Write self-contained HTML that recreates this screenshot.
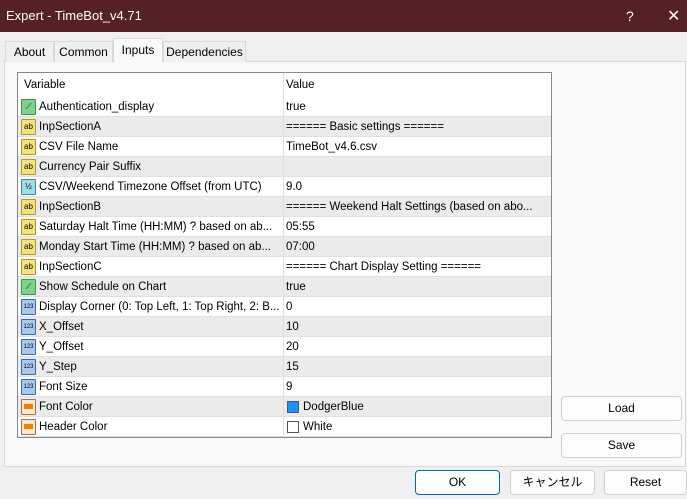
<!DOCTYPE html>
<html><head><meta charset="utf-8"><style>
*{box-sizing:border-box;margin:0;padding:0}
body{width:687px;height:499px;background:#f0f0f0;font-family:"Liberation Sans","Noto Sans CJK JP",sans-serif;font-size:11.5px;color:#000;position:relative;overflow:hidden}
.title{position:absolute;left:0;top:0;width:687px;height:32px;background:#562027;color:#fff;font-size:13px}
.title span{position:absolute;top:8px}
.tab{position:absolute;top:41px;height:21px;border:1px solid #d9d9d9;border-bottom:none;background:#f0f0f0;padding:3px 0;text-align:center;font-size:12px;white-space:nowrap}
.panel{position:absolute;left:4px;top:61px;width:682px;height:406px;border:1px solid #d9d9d9;background:#f9f9f9}
.grid{position:absolute;left:17px;top:72px;width:535px;height:366px;border:1px solid #828790;background:#fff}
.row{position:absolute;left:0;width:533px;height:20px;border-bottom:1px solid #e0e0e0}
.row.g{background:#ebebeb}
.row .n{position:absolute;left:21px;top:4px;width:242px;overflow:hidden;white-space:nowrap}
.row .v{position:absolute;left:268px;top:4px;white-space:nowrap}
.row .d{position:absolute;left:265px;top:0;width:1px;height:20px;background:#e0e0e0}
.ic{position:absolute;left:3px;top:2px;width:15px;height:16px;border:1px solid #b09a30;background:#f5e27a;font-size:8px;line-height:14px;text-align:center;border-radius:1px}
.btn{position:absolute;background:#fdfdfd;border:1px solid #d0d0d0;border-radius:4px;text-align:center;font-size:12px;line-height:22px}
</style></head><body>
<div class="title"><span style="left:6px">Expert - TimeBot_v4.71</span><span style="left:626px;font-size:14px">?</span><span style="left:667px;font-size:16px;top:6px">✕</span></div>
<div class="panel"></div>
<div class="tab" style="left:5px;width:49px">About</div>
<div class="tab" style="left:54px;width:59px">Common</div>
<div class="tab" style="left:113px;top:38px;height:24px;width:50px;background:#f9f9f9;padding-top:4px">Inputs</div>
<div class="tab" style="left:163px;width:83px">Dependencies</div>
<div class="grid">
<div class="row" style="top:0;height:24px;border:none"><span class="n" style="left:6px;top:6px">Variable</span><span class="v" style="top:6px">Value</span><span class="d" style="height:24px"></span></div>
<div class="row" style="top:24px"><span class="ic" style="background:#7ed38a;border-color:#3a9a4a">⟋</span><span class="n">Authentication_display</span><span class="d"></span><span class="v">true</span></div>
<div class="row g" style="top:44px"><span class="ic">ab</span><span class="n">InpSectionA</span><span class="d"></span><span class="v">====== Basic settings ======</span></div>
<div class="row" style="top:64px"><span class="ic">ab</span><span class="n">CSV File Name</span><span class="d"></span><span class="v">TimeBot_v4.6.csv</span></div>
<div class="row g" style="top:84px"><span class="ic">ab</span><span class="n">Currency Pair Suffix</span><span class="d"></span><span class="v"></span></div>
<div class="row" style="top:104px"><span class="ic" style="background:#9fdbe8;border-color:#3a8aa8">½</span><span class="n">CSV/Weekend Timezone Offset (from UTC)</span><span class="d"></span><span class="v">9.0</span></div>
<div class="row g" style="top:124px"><span class="ic">ab</span><span class="n">InpSectionB</span><span class="d"></span><span class="v">====== Weekend Halt Settings (based on abo...</span></div>
<div class="row" style="top:144px"><span class="ic">ab</span><span class="n">Saturday Halt Time (HH:MM) ? based on ab...</span><span class="d"></span><span class="v">05:55</span></div>
<div class="row g" style="top:164px"><span class="ic">ab</span><span class="n">Monday Start Time (HH:MM) ? based on ab...</span><span class="d"></span><span class="v">07:00</span></div>
<div class="row" style="top:184px"><span class="ic">ab</span><span class="n">InpSectionC</span><span class="d"></span><span class="v">====== Chart Display Setting ======</span></div>
<div class="row g" style="top:204px"><span class="ic" style="background:#7ed38a;border-color:#3a9a4a">⟋</span><span class="n">Show Schedule on Chart</span><span class="d"></span><span class="v">true</span></div>
<div class="row" style="top:224px"><span class="ic" style="background:#a8c8f0;border-color:#3a6aa8;font-size:6px">123</span><span class="n">Display Corner (0: Top Left, 1: Top Right, 2: B...</span><span class="d"></span><span class="v">0</span></div>
<div class="row g" style="top:244px"><span class="ic" style="background:#a8c8f0;border-color:#3a6aa8;font-size:6px">123</span><span class="n">X_Offset</span><span class="d"></span><span class="v">10</span></div>
<div class="row" style="top:264px"><span class="ic" style="background:#a8c8f0;border-color:#3a6aa8;font-size:6px">123</span><span class="n">Y_Offset</span><span class="d"></span><span class="v">20</span></div>
<div class="row g" style="top:284px"><span class="ic" style="background:#a8c8f0;border-color:#3a6aa8;font-size:6px">123</span><span class="n">Y_Step</span><span class="d"></span><span class="v">15</span></div>
<div class="row" style="top:304px"><span class="ic" style="background:#a8c8f0;border-color:#3a6aa8;font-size:6px">123</span><span class="n">Font Size</span><span class="d"></span><span class="v">9</span></div>
<div class="row g" style="top:324px"><span class="ic" style="background:#f8e8d0;border-color:#a07050"><span style="display:block;margin:4px 2px;height:5px;background:#f08000"></span></span><span class="n">Font Color</span><span class="d"></span><span style="position:absolute;left:269px;top:4px;width:12px;height:12px;background:#1e90ff;border:1px solid #555"></span><span class="v" style="left:285px">DodgerBlue</span></div>
<div class="row" style="top:344px"><span class="ic" style="background:#f8e8d0;border-color:#a07050"><span style="display:block;margin:4px 2px;height:5px;background:#f08000"></span></span><span class="n">Header Color</span><span class="d"></span><span style="position:absolute;left:269px;top:4px;width:12px;height:12px;background:#fff;border:1px solid #555"></span><span class="v" style="left:285px">White</span></div>
</div>
<div class="btn" style="left:561px;top:396px;width:121px;height:25px">Load</div>
<div class="btn" style="left:561px;top:433px;width:121px;height:25px">Save</div>
<div class="btn" style="left:415px;top:470px;width:85px;height:25px;border-color:#0067c0">OK</div>
<div class="btn" style="left:510px;top:470px;width:85px;height:25px">キャンセル</div>
<div class="btn" style="left:604px;top:470px;width:83px;height:25px">Reset</div>
</body></html>
